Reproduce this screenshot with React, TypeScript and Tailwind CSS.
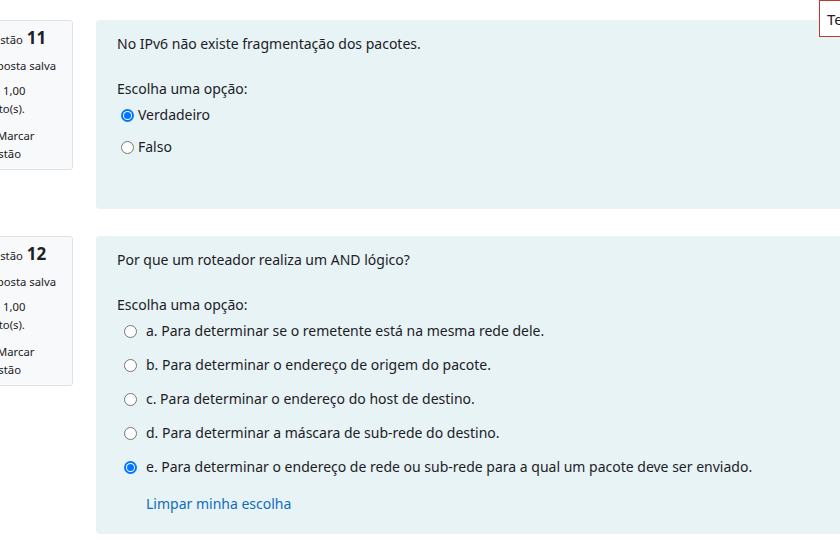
const font = { fontFamily: '"Noto Sans", "Open Sans", sans-serif' };

function Radio({ checked }: { checked?: boolean }) {
  return checked ? (
    <span className="flex h-[13px] w-[13px] shrink-0 items-center justify-center rounded-full bg-[#0075ff]">
      <span className="flex h-[9px] w-[9px] items-center justify-center rounded-full bg-white">
        <span className="h-[7px] w-[7px] rounded-full bg-[#0075ff]" />
      </span>
    </span>
  ) : (
    <span className="h-[13px] w-[13px] shrink-0 rounded-full border border-[#767676] bg-white" />
  );
}

function Info({ n }: { n: number }) {
  return (
    <div className="ml-[-29px] h-[150px] w-[102px] shrink-0 rounded-[3px] border border-[#dee2e6] bg-[#f8f9fa] px-[6px] pt-[8px] text-[11.3px] leading-[18px] text-[#1d2125]">
      <div className="flex items-baseline gap-1 whitespace-nowrap">
        <span>Questão</span>
        <span className="text-[17px] font-bold">{n}</span>
      </div>
      <div className="mt-[8px] whitespace-nowrap">Resposta salva</div>
      <div className="mt-[7px]">Vale 1,00 ponto(s).</div>
      <div className="mt-[9px]">
        <svg className="mr-[5px] inline-block h-[14px] w-[14px] align-[-2px]" viewBox="0 0 16 16">
          <path d="M3 1v14M3 2h9l-2 3.5 2 3.5H3" fill="none" stroke="#6c757d" strokeWidth="1.4" />
        </svg>
        Marcar questão
      </div>
    </div>
  );
}

const optionsQ12 = [
  "a. Para determinar se o remetente está na mesma rede dele.",
  "b. Para determinar o endereço de origem do pacote.",
  "c. Para determinar o endereço do host de destino.",
  "d. Para determinar a máscara de sub-rede do destino.",
  "e. Para determinar o endereço de rede ou sub-rede para a qual um pacote deve ser enviado.",
];

export default function App() {
  return (
    <div className="relative h-[540px] w-[840px] overflow-hidden bg-white text-[14px] text-[#1d2125]" style={font}>
      <div className="absolute right-[-30px] top-0 h-[37px] w-[51px] border border-[#c0392b] bg-white px-[7px] pt-[7px] text-[15px] leading-[22px]">
        Te
      </div>

      <div className="flex flex-col gap-[27px] pt-[20px]">
        <div className="flex gap-[23px]">
          <Info n={11} />
          <div className="h-[189px] flex-1 rounded-l-[4px] bg-[#e7f3f5] pl-[21px] pt-[13px]">
            <p className="leading-[22px]">No IPv6 não existe fragmentação dos pacotes.</p>
            <p className="mt-[23px] leading-[22px]">Escolha uma opção:</p>
            <div className="mt-[4px] flex flex-col gap-[10px] pl-[4px]">
              <label className="flex items-center gap-[4px] leading-[22px]">
                <Radio checked />
                Verdadeiro
              </label>
              <label className="flex items-center gap-[4px] leading-[22px]">
                <Radio />
                Falso
              </label>
            </div>
          </div>
        </div>

        <div className="flex gap-[23px]">
          <Info n={12} />
          <div className="h-[298px] flex-1 rounded-l-[4px] bg-[#e7f3f5] pl-[21px] pt-[13px]">
            <p className="leading-[22px]">Por que um roteador realiza um AND lógico?</p>
            <p className="mt-[23px] leading-[22px]">Escolha uma opção:</p>
            <div className="mt-[4px] flex flex-col gap-[12px] pl-[7px]">
              {optionsQ12.map((o, i) => (
                <label key={o} className="flex items-center gap-[9px] leading-[22px]">
                  <Radio checked={i === 4} />
                  <span className="whitespace-nowrap">{o}</span>
                </label>
              ))}
            </div>
            <a className="mt-[15px] block pl-[29px] leading-[22px] text-[#0f6cbf]">Limpar minha escolha</a>
          </div>
        </div>
      </div>
    </div>
  );
}
